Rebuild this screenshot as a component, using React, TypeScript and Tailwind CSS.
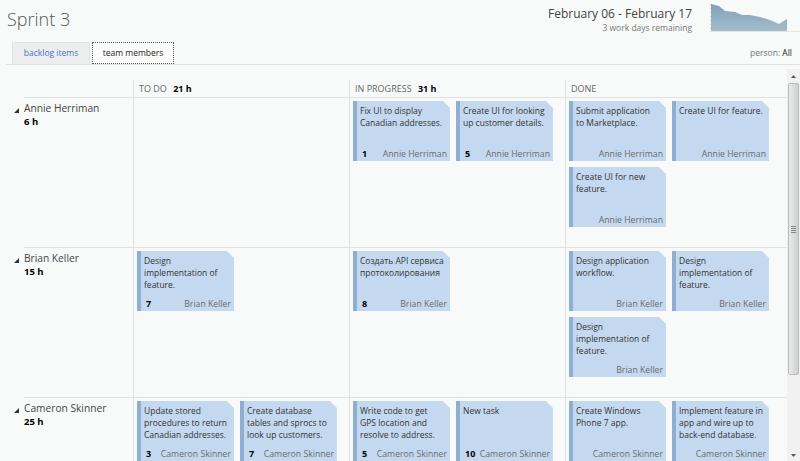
import { FC } from "react";

type Task = { title: string; est?: number; owner: string };

const board: { name: string; hours: string; todo: Task[]; doing: Task[]; done: Task[] }[] = [
  {
    name: "Annie Herriman",
    hours: "6 h",
    todo: [],
    doing: [
      { title: "Fix UI to display Canadian addresses.", est: 1, owner: "Annie Herriman" },
      { title: "Create UI for looking up customer details.", est: 5, owner: "Annie Herriman" },
    ],
    done: [
      { title: "Submit application\nto Marketplace.", owner: "Annie Herriman" },
      { title: "Create UI for feature.", owner: "Annie Herriman" },
      { title: "Create UI for new feature.", owner: "Annie Herriman" },
    ],
  },
  {
    name: "Brian Keller",
    hours: "15 h",
    todo: [{ title: "Design implementation of feature.", est: 7, owner: "Brian Keller" }],
    doing: [{ title: "Создать API сервиса протоколирования", est: 8, owner: "Brian Keller" }],
    done: [
      { title: "Design application workflow.", owner: "Brian Keller" },
      { title: "Design implementation of feature.", owner: "Brian Keller" },
      { title: "Design implementation of feature.", owner: "Brian Keller" },
    ],
  },
  {
    name: "Cameron Skinner",
    hours: "25 h",
    todo: [
      { title: "Update stored procedures to return Canadian addresses.", est: 3, owner: "Cameron Skinner" },
      { title: "Create database tables and sprocs to look up customers.", est: 7, owner: "Cameron Skinner" },
    ],
    doing: [
      { title: "Write code to get GPS location and resolve to address.", est: 5, owner: "Cameron Skinner" },
      { title: "New task", est: 10, owner: "Cameron Skinner" },
    ],
    done: [
      { title: "Create Windows Phone 7 app.", owner: "Cameron Skinner" },
      { title: "Implement feature in app and wire up to back-end database.", owner: "Cameron Skinner" },
    ],
  },
];

const Card: FC<{ task: Task }> = ({ task }) => (
  <div className="w-[97px] h-[60px] bg-[#c4d9f0] border-l-[4px] border-[#8eaed3] flex flex-col justify-between [clip-path:polygon(0_0,calc(100%-7px)_0,100%_7px,100%_100%,0_100%)]">
    <div className="pl-[3px] pr-[5px] pt-[4px] text-[8.5px] leading-[12px] text-[#333] whitespace-pre-line">{task.title}</div>
    <div className="flex items-end justify-between pl-[5px] pr-[3px] pb-[1px]">
      <span className="text-[9px] font-bold text-black leading-[12px]">{task.est ?? ""}</span>
      <span className="text-[8.7px] text-[#6b6b6b] leading-[12px]">{task.owner}</span>
    </div>
  </div>
);

const Cell: FC<{ tasks: Task[]; w: string }> = ({ tasks, w }) => (
  <div className={`${w} border-l border-[#dfe2e0] pl-[3px] pt-[3px] flex flex-wrap content-start gap-[6px]`}>
    {tasks.map((t, i) => (
      <Card key={i} task={t} />
    ))}
  </div>
);

const Burndown: FC = () => (
  <svg width="90" height="30" viewBox="0 0 90 30" className="block">
    <defs>
      <linearGradient id="bd" x1="0" y1="0" x2="0" y2="1">
        <stop offset="0" stopColor="#7fa2b8" />
        <stop offset="1" stopColor="#a4bccb" />
      </linearGradient>
    </defs>
    <path d="M1 1 L9 3 L15 8 L25 9 L32 12 L40 12 L50 14 L60 17 L69 21 L77 16 L77 28 L1 28 Z" fill="url(#bd)" />
    <line x1="0" y1="28.5" x2="90" y2="28.5" stroke="#e2e5e3" />
    <line x1="0.5" y1="1" x2="0.5" y2="28" stroke="#c8d2d8" strokeDasharray="1 3" />
  </svg>
);

const App: FC = () => {
  return (
    <div className="w-[800px] h-[461px] overflow-hidden bg-[#f8faf9] font-['Open_Sans',sans-serif] flex flex-col">
      <div className="h-[40px] flex justify-between">
        <h1 className="pl-[7px] pt-[7px] text-[18px] leading-[24px] font-light text-[#555]">Sprint 3</h1>
        <div className="flex items-start">
          <div className="text-right pt-[5px]">
            <div className="text-[12px] leading-[17px] text-[#444]">February 06 - February 17</div>
            <div className="text-[8.5px] leading-[11px] text-[#777]">3 work days remaining</div>
          </div>
          <div className="ml-[18px] mt-[3px]">
            <Burndown />
          </div>
        </div>
      </div>

      <div className="ml-[6px] h-[25px] border-b border-[#dfe2e0] flex items-end justify-between">
        <div className="flex items-end gap-[2px] pl-[6px]">
          <div className="w-[78px] h-[22px] bg-[#eceeed] border border-b-0 border-[#e2e4e3] flex items-center justify-center text-[8.5px] text-[#4a74c9]">
            backlog items
          </div>
          <div className="w-[82px] h-[22px] bg-white border border-dotted border-[#555] flex items-center justify-center text-[8.5px] text-[#222]">
            team members
          </div>
        </div>
        <div className="pr-[8px] pb-[4px] text-[8.5px] text-[#777]">
          person: <span className="text-[#222]">All</span>
        </div>
      </div>

      <div className="flex flex-1 mt-[4px] min-h-0">
        <div className="flex-1 pt-[11px] overflow-hidden">
          <div className="flex">
            <div className="w-[24px]" />
            <div className="flex-1 flex h-[18px] border-b border-[#dfe2e0] text-[9px]">
              <div className="w-[109px]" />
              <div className="w-[216px] border-l border-[#dfe2e0] pl-[5px] pt-[2px] text-[#666]">
                TO DO <span className="ml-[4px] font-bold text-black">21 h</span>
              </div>
              <div className="w-[216px] border-l border-[#dfe2e0] pl-[5px] pt-[2px] text-[#666]">
                IN PROGRESS <span className="ml-[4px] font-bold text-black">31 h</span>
              </div>
              <div className="flex-1 border-l border-[#dfe2e0] pl-[5px] pt-[2px] text-[#666]">DONE</div>
            </div>
          </div>

          {board.map((row, i) => (
            <div key={row.name} className={`flex ${i < 2 ? "h-[150px]" : "h-[80px]"}`}>
              <div className="w-[24px] pt-[10px] pl-[14px]">
                <svg width="5" height="5" viewBox="0 0 5 5" className="block">
                  <path d="M5 0 L5 5 L0 5 Z" fill="#333" />
                </svg>
              </div>
              <div className="flex-1 flex border-b border-[#dfe2e0]">
                <div className="w-[109px] pt-[3px]">
                  <div className="text-[10.2px] leading-[14px] text-[#444]">{row.name}</div>
                  <div className="text-[9.5px] leading-[14px] font-bold text-black">{row.hours}</div>
                </div>
                <Cell tasks={row.todo} w="w-[216px]" />
                <Cell tasks={row.doing} w="w-[216px]" />
                <Cell tasks={row.done} w="flex-1" />
              </div>
            </div>
          ))}
        </div>

        <div className="w-[13px] bg-[#f0f1f0] flex flex-col items-center">
          <div className="h-[14px] flex items-center justify-center">
            <svg width="5" height="3" viewBox="0 0 5 3"><path d="M2.5 0 L5 3 L0 3 Z" fill="#555" /></svg>
          </div>
          <div className="w-[11px] h-[292px] rounded-[2px] border border-[#b9bcbb] bg-gradient-to-r from-[#e9eaea] via-[#dcdedd] to-[#cfd1d0] flex items-center justify-center">
            <div className="flex flex-col gap-[1px]">
              <div className="w-[5px] h-[1px] bg-[#888]" />
              <div className="w-[5px] h-[1px] bg-[#888]" />
              <div className="w-[5px] h-[1px] bg-[#888]" />
              <div className="w-[5px] h-[1px] bg-[#888]" />
            </div>
          </div>
          <div className="flex-1" />
          <div className="h-[12px] flex items-center justify-center">
            <svg width="5" height="3" viewBox="0 0 5 3"><path d="M0 0 L5 0 L2.5 3 Z" fill="#555" /></svg>
          </div>
        </div>
      </div>
    </div>
  );
};

export default App;
